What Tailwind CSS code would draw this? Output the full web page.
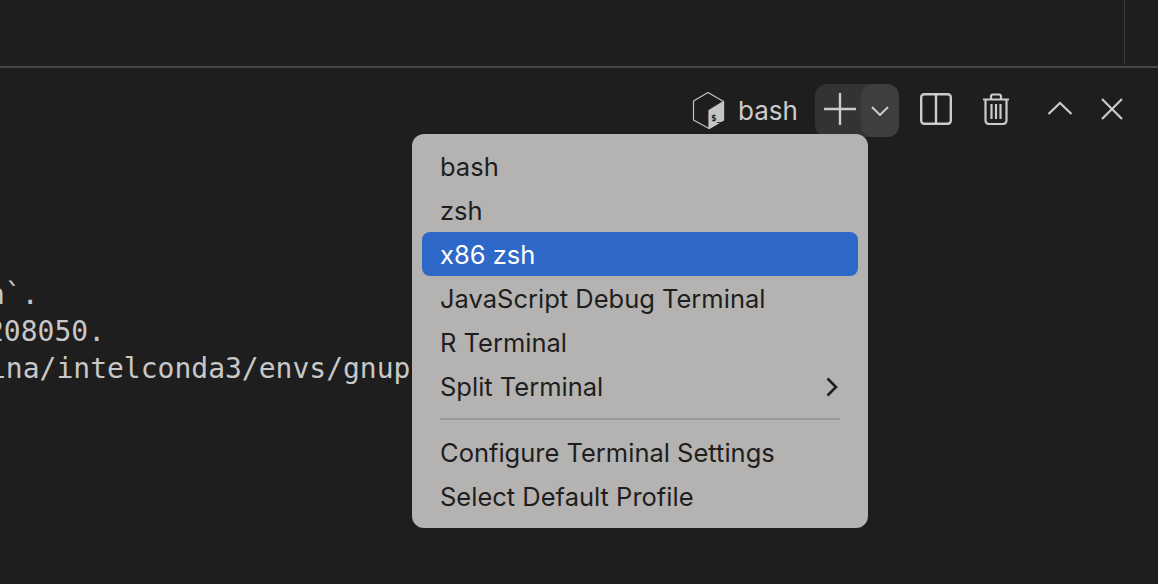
<!DOCTYPE html>
<html lang="en">
  <head>
    <meta charset="UTF-8" />
    <title>Terminal menu</title>
    <script src="https://cdn.jsdelivr.net/npm/@tailwindcss/browser@4"></script>
  </head>
  <body class="bg-[#1e1e1e] overflow-hidden">
    <div class="relative w-[1158px] h-[584px] font-['Inter',sans-serif]">
      <!-- editor area -->
      <div class="h-[66px] flex justify-end border-b-2 border-[#464646] box-content">
        <div class="w-[34px] h-[64px] border-l border-[#3c3c3c]"></div>
      </div>

      <!-- terminal toolbar -->
      <div class="flex items-start h-[68px] pt-[16px] pl-[692px] text-[#cccccc]">
        <svg class="mt-[6px]" width="34" height="40" viewBox="0 0 34 40" fill="none">
          <path d="M16 2.500 L31.500 11.500 V30 L17 38.500 L1.500 30 V11 Z" fill="#1e1e1e" stroke="#c4c4c4" stroke-width="1.200" stroke-linejoin="round" />
          <path d="M31.500 11.500 V30 L17 38.500 V20.500 Z" fill="#c4c4c4" stroke="#c4c4c4" stroke-width="1.200" stroke-linejoin="round" />
          <text x="19" y="31" font-size="9.500" font-weight="700" fill="#1e1e1e" font-family="'DejaVu Sans Mono', monospace">$_</text>
        </svg>
        <span class="ml-[12px] mt-[11px] text-[26px] leading-[32px]">bash</span>
        <div class="ml-[17px] flex w-[84px] h-[53px] bg-[#333333] rounded-[12px]">
          <div class="w-[46px] flex items-start justify-center pl-[4px] pt-[9px]">
            <svg width="32" height="32" viewBox="0 0 32 32" stroke="#cccccc" stroke-width="2.4" fill="none"><path d="M0 16 H32 M16 0 V32" /></svg>
          </div>
          <div class="w-[38px] flex items-center justify-center bg-[#3e3e3e] rounded-[12px]">
            <svg width="18" height="10" viewBox="0 0 18 10" stroke="#cccccc" stroke-width="2" fill="none"><path d="M1 1 L9 9 L17 1" /></svg>
          </div>
        </div>
        <svg class="ml-[21px] mt-[9px]" width="32" height="32" viewBox="0 0 32 32" stroke="#cccccc" stroke-width="2.4" fill="none">
          <rect x="1.2" y="1.2" width="29.6" height="29.6" rx="3" />
          <path d="M16 1 V31" />
        </svg>
        <svg class="ml-[28px] mt-[9px]" width="32" height="32" viewBox="0 0 32 32" stroke="#cccccc" stroke-width="2.2" fill="none">
          <path d="M3 6.5 H29 M11 6 V3.5 Q11 1.5 13 1.5 H19 Q21 1.5 21 3.5 V6" />
          <path d="M5.5 6.5 V27 Q5.5 31 9.5 31 H22.5 Q26.5 31 26.5 27 V6.5" />
          <path d="M11.5 11 V26 M16 11 V26 M20.500 11 V26" />
        </svg>
        <svg class="ml-[35px] mt-[17px]" width="26" height="14" viewBox="0 0 26 14" stroke="#cccccc" stroke-width="2.2" fill="none"><path d="M1.500 13 L13 2 L24.500 13" /></svg>
        <svg class="ml-[27px] mt-[13px]" width="24" height="24" viewBox="0 0 24 24" stroke="#cccccc" stroke-width="2.2" fill="none"><path d="M2 2 L22 22 M22 2 L2 22" /></svg>
      </div>

      <!-- terminal output, scrolled off to the left -->
      <div class="mt-[140px] w-[412px] overflow-hidden font-['DejaVu_Sans_Mono',monospace] text-[28px] leading-[37px] text-[#c8c8c8] whitespace-nowrap">
        <div class="-ml-[12px]">n`.</div>
        <div class="-ml-[13px]">208050.</div>
        <div class="-ml-[11px]">ina/intelconda3/envs/gnuplot</div>
      </div>

      <!-- dropdown menu -->
      <div class="absolute left-[412px] top-[134px] w-[456px] h-[394px] bg-[#b5b3b1] rounded-[12px] p-[10px] text-[#1e1e1e] text-[25.500px] leading-[46px]">
        <div class="px-[18px] h-[44px]">bash</div>
        <div class="px-[18px] h-[44px]">zsh</div>
        <div class="px-[18px] h-[44px] bg-[#2e68c8] text-white rounded-[8px]">x86 zsh</div>
        <div class="px-[18px] h-[44px]">JavaScript Debug Terminal</div>
        <div class="px-[18px] h-[44px]">R Terminal</div>
        <div class="px-[18px] h-[44px] flex items-start justify-between">
          <span>Split Terminal</span>
          <svg class="mr-[2px] mt-[13px]" width="12" height="20" viewBox="0 0 12 20" stroke="#1e1e1e" stroke-width="2.6" fill="none"><path d="M1.500 1.500 L10 10 L1.500 18.500" /></svg>
        </div>
        <div class="mx-[18px] my-[10px] h-[2px] bg-[#9c9a98]"></div>
        <div class="px-[18px] h-[44px]">Configure Terminal Settings</div>
        <div class="px-[18px] h-[44px]">Select Default Profile</div>
      </div>
    </div>
  </body>
</html>
